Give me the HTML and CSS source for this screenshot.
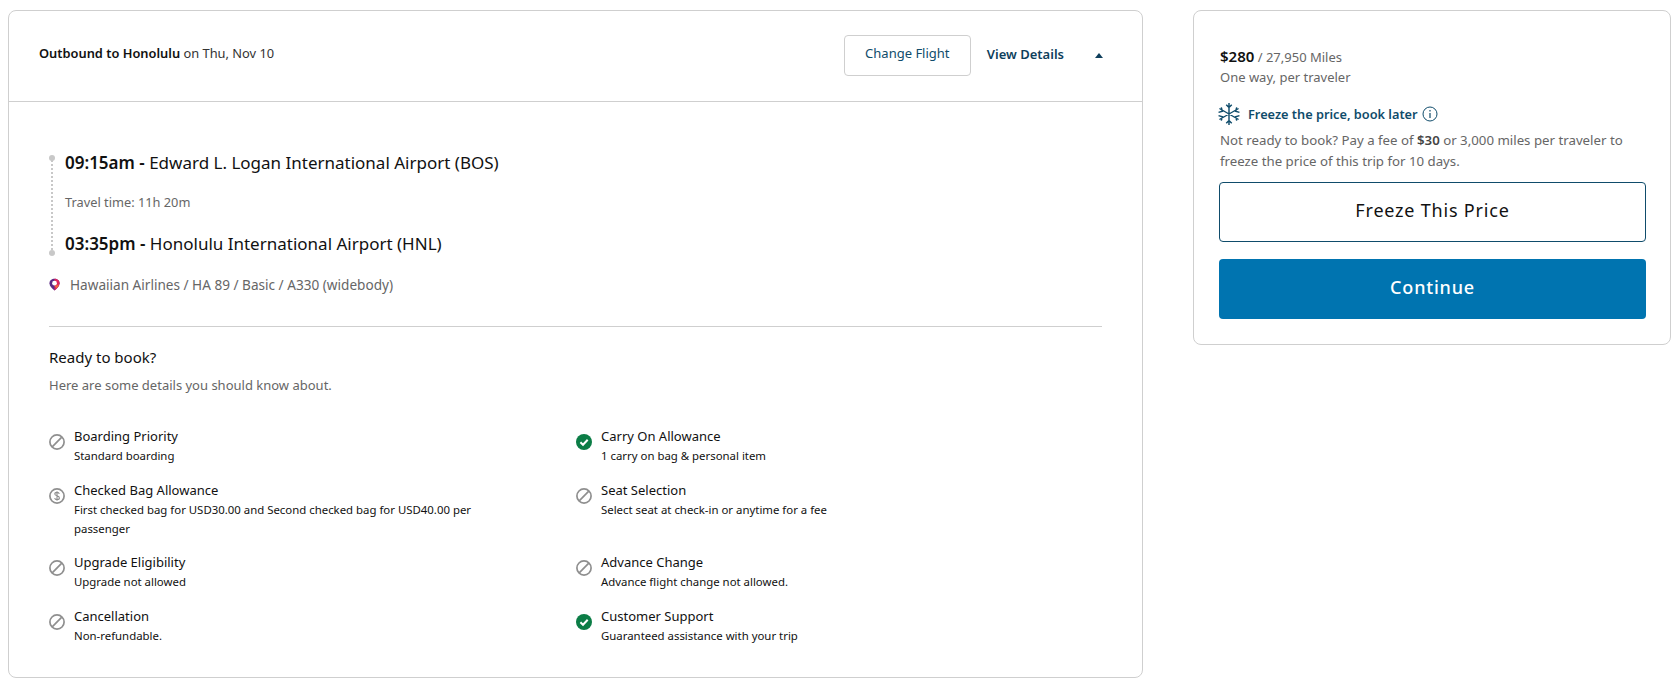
FILE: index.html
```html
<!DOCTYPE html>
<html lang="en">
<head>
<meta charset="utf-8">
<title>Flight review</title>
<link rel="stylesheet" href="styles.css">
</head>
<body>
<svg class="defs" width="0" height="0" aria-hidden="true">
  <symbol id="no" viewBox="0 0 16 16"><circle cx="8" cy="8" r="7.1" fill="none" stroke="#8f8f8f" stroke-width="1.700"/><path d="M3.2 12.8 12.8 3.2" stroke="#8f8f8f" stroke-width="1.700"/></symbol>
  <symbol id="yes" viewBox="0 0 16 16"><circle cx="8" cy="8" r="8" fill="#0b7d46"/><path d="M4.4 8.3 7 10.8 11.7 5.8" fill="none" stroke="#fff" stroke-width="2"/></symbol>
  <symbol id="fee" viewBox="0 0 16 16"><circle cx="8" cy="8" r="7.1" fill="none" stroke="#8f8f8f" stroke-width="1.700"/><path d="M10.3 5.8C10 4.8 9.100 4.400 8 4.400 6.700 4.400 5.800 5 5.800 6 5.800 8.300 10.400 7.400 10.400 9.900 10.400 11 9.300 11.600 8 11.600 6.800 11.600 5.900 11.100 5.600 10.100M8 3.200V12.800" fill="none" stroke="#8f8f8f" stroke-width="1.100"/></symbol>
</svg>
<main class="page">
  <section class="card flight">
    <header class="flight-head">
      <p class="route"><strong>Outbound to Honolulu</strong> on Thu, Nov 10</p>
      <div class="head-actions">
        <button class="change">Change Flight</button>
        <span class="details">View Details</span>
        <span class="caret"></span>
      </div>
    </header>
    <div class="flight-body">
      <div class="timeline">
        <span class="dot dot-top"></span>
        <span class="dot dot-end"></span>
        <p class="stop"><strong>09:15am -</strong> Edward L. Logan International Airport (BOS)</p>
        <p class="travel">Travel time: 11h 20m</p>
        <p class="stop"><strong>03:35pm -</strong> Honolulu International Airport (HNL)</p>
      </div>
      <p class="airline">
        <svg class="logo" viewBox="0 0 12 14"><path d="M6 .8C9 .8 11.500 2.600 11.500 5.600 11.500 9 8.500 11.500 6 13.500 3.500 11.500 .5 9 .5 5.600 .5 2.600 3 .8 6 .8Z" fill="#5b2a86"/><path d="M6 .8C9 .8 11.500 2.600 11.500 5.600 11.500 9 8.500 11.500 6 13.500Z" fill="#e0245e"/><path d="M6 8.500 8.500 11 11 7 6 8.500Z" fill="#f26b38"/><circle cx="6" cy="5.500" r="2.600" fill="#fff"/></svg>
        Hawaiian Airlines / HA 89 / Basic / A330 (widebody)
      </p>
      <hr class="rule">
      <h2 class="ready">Ready to book?</h2>
      <p class="know">Here are some details you should know about.</p>
      <ul class="perks">
        <li><svg class="ico"><use href="#no"/></svg><div><h3>Boarding Priority</h3><p>Standard boarding</p></div></li>
        <li><svg class="ico"><use href="#yes"/></svg><div><h3>Carry On Allowance</h3><p>1 carry on bag &amp; personal item</p></div></li>
        <li><svg class="ico"><use href="#fee"/></svg><div><h3>Checked Bag Allowance</h3><p>First checked bag for USD30.00 and Second checked bag for USD40.00 per passenger</p></div></li>
        <li><svg class="ico"><use href="#no"/></svg><div><h3>Seat Selection</h3><p>Select seat at check-in or anytime for a fee</p></div></li>
        <li><svg class="ico"><use href="#no"/></svg><div><h3>Upgrade Eligibility</h3><p>Upgrade not allowed</p></div></li>
        <li><svg class="ico"><use href="#no"/></svg><div><h3>Advance Change</h3><p>Advance flight change not allowed.</p></div></li>
        <li><svg class="ico"><use href="#no"/></svg><div><h3>Cancellation</h3><p>Non-refundable.</p></div></li>
        <li><svg class="ico"><use href="#yes"/></svg><div><h3>Customer Support</h3><p>Guaranteed assistance with your trip</p></div></li>
      </ul>
    </div>
  </section>
  <aside class="card price">
    <p class="amount"><strong>$280</strong> / 27,950 Miles</p>
    <p class="muted">One way, per traveler</p>
    <div class="freeze-title">
      <svg class="snow" viewBox="1 1 20 20" fill="none" stroke="#0f4c6b" stroke-width="1.300"><path d="M11 1V21M2.300 6 19.700 16M2.300 16 19.700 6M8.500 2.500 11 5 13.500 2.500M8.500 19.500 11 17 13.500 19.500M1.500 9.500 5 8.500 4 5M20.500 12.500 17 13.500 18 17M1.500 12.500 5 13.500 4 17M20.500 9.500 17 8.500 18 5"/></svg>
      <strong>Freeze the price, book later</strong>
      <svg class="info" viewBox="0 0 16 16" fill="none" stroke="#0f4c6b"><circle cx="8" cy="8" r="7"/><path d="M8 7V12M8 4V5.500" stroke-width="1.200"/></svg>
    </div>
    <p class="muted note">Not ready to book? Pay a fee of <b>$30</b> or 3,000 miles per traveler to freeze the price of this trip for 10 days.</p>
    <button class="btn outline">Freeze This Price</button>
    <button class="btn solid">Continue</button>
  </aside>
</main>
</body>
</html>
```
FILE: styles.css
```css
* { box-sizing: border-box; }
html, body { margin: 0; background: #fff; }
body { font-family: "Noto Sans", "Open Sans", sans-serif; color: #111; overflow: hidden; }
p, h2, h3, ul { margin: 0; padding: 0; }
.defs { position: absolute; }
.page { display: flex; align-items: flex-start; gap: 50px; padding: 10px 5px 0 8px; }
.card { background: #fff; border: 1px solid #cfcfcf; border-radius: 8px; }
.flight { width: 1135px; height: 668px; flex: none; }
.flight-head { height: 91px; border-bottom: 1px solid #cfcfcf; display: flex; align-items: center; justify-content: space-between; padding: 0 30px; }
.route { font-size: 12.85px; color: #333; margin-bottom: 6px; }
.route strong { color: #111; font-weight: 600; }
.head-actions { display: flex; align-items: center; margin-bottom: 2px; }
.change { width: 127px; height: 41px; background: #fff; border: 1px solid #cfcfcf; border-radius: 4px; font: 13px "Noto Sans", sans-serif; color: #0f4c6b; padding: 0 0 4px; }
.details { font-size: 13px; font-weight: 600; color: #0f3f5c; margin: 0 0 2px 16px; }
.caret { width: 0; height: 0; border: 4px solid transparent; border-top: 0; border-bottom: 5px solid #0f3f5c; margin: 0 9px 0 31px; }
.flight-body { padding: 49px 40px 0; }
.timeline { position: relative; padding-left: 16px; height: 105px; display: flex; flex-direction: column; justify-content: space-between; }
.timeline::before { content: ""; position: absolute; left: 2px; top: 6px; bottom: 3px; border-left: 2px dotted #c8c8c8; }
.dot { position: absolute; left: 0; width: 6px; height: 6px; border-radius: 50%; background: #c8c8c8; }
.dot-top { top: 4px; }
.dot-end { bottom: 0; }
.stop { font-size: 17px; line-height: 24px; }
.stop strong { font-weight: 600; }
.travel { font-size: 12.8px; color: #666; margin-bottom: 4px; }
.airline { font-size: 13.6px; color: #666; display: flex; align-items: center; gap: 10px; margin-top: 19px; }
.logo { width: 11px; height: 13px; }
.rule { border: 0; border-top: 1px solid #cfcfcf; margin: 32px 0 0; }
.ready { font-size: 15px; font-weight: 400; margin-top: 20px; }
.know { font-size: 13px; color: #666; margin-top: 9px; }
.perks { list-style: none; display: grid; grid-template-columns: 527px 1fr; margin-top: 32px; row-gap: 14.5px; }
.perks li { display: flex; gap: 9px; }
.ico { width: 16px; height: 16px; flex: none; margin-top: 8px; }
.perks h3 { font-size: 13px; font-weight: 400; line-height: 20px; }
.perks p { font-size: 11.4px; line-height: 19px; width: 420px; }
.price { width: 478px; height: 335px; flex: none; padding: 35px 26px; }
.amount { font-size: 13px; color: #666; margin-bottom: 1px; }
.amount strong { font-size: 15px; color: #111; font-weight: 600; }
.muted { font-size: 13px; color: #666; line-height: 20px; }
.freeze-title { display: flex; align-items: center; gap: 7px; margin-top: 16px; color: #0f4c6b; font-size: 12.75px; }
.freeze-title strong { font-weight: 600; }
.snow { width: 22px; height: 22px; margin: 0 1px 0 -2px; }
.info { width: 16px; height: 16px; margin-left: -3px; }
.note { margin-top: 5px; font-size: 13.25px; line-height: 21px; }
.note b { color: #444; font-weight: 600; }
.btn { display: block; width: 427px; height: 60px; margin-left: -1px; border-radius: 4px; font: 400 18px "Noto Sans", sans-serif; letter-spacing: 0.8px; padding: 0 0 5px; }
.outline { background: #fff; border: 1px solid #0f4c6b; color: #111; margin-top: 10px; }
.solid { background: #0074b0; border: 0; color: #fff; margin-top: 17px; font-weight: 500; }
```
